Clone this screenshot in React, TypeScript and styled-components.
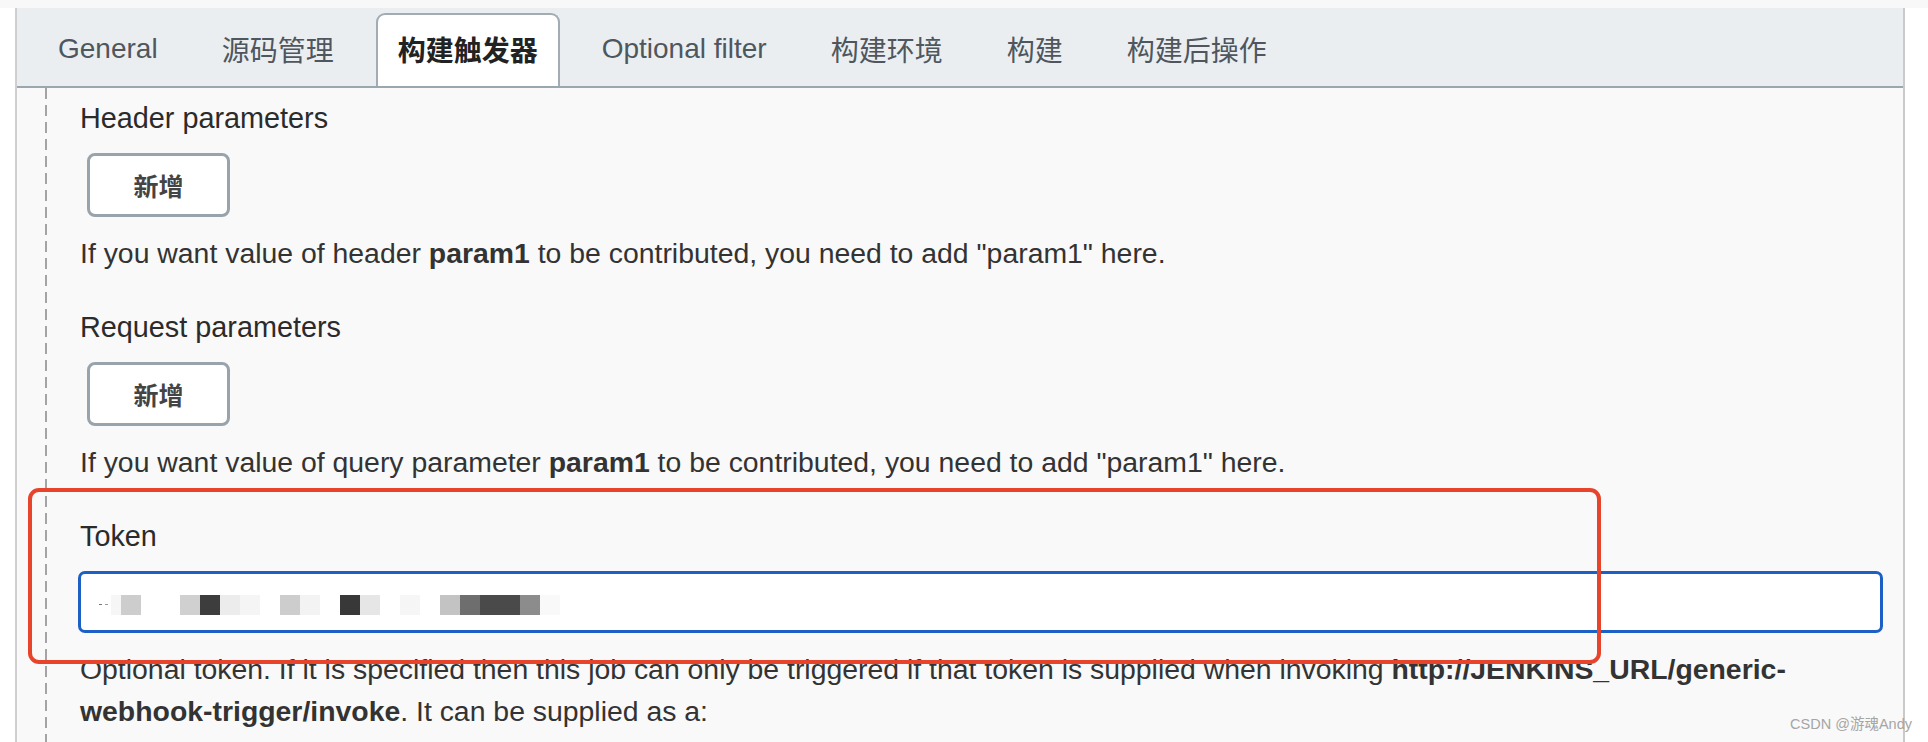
import React from "react";
import styled, { createGlobalStyle } from "styled-components";

const Global = createGlobalStyle`
  html, body { margin: 0; padding: 0; height: 100%; background: #ffffff; }
  body { font-family: "Liberation Sans", Arial, "Noto Sans CJK SC", sans-serif; color: #333; }
  #root { min-height: 100%; }
`;

const Page = styled.div`
  min-height: 742px;
  display: flex;
  flex-direction: column;
  position: relative;
  overflow: hidden;
`;

const TopStrip = styled.div`
  height: 8px;
  background: #f8f8f8;
  flex: none;
`;

const Panel = styled.div`
  margin-left: 15px;
  width: 1890px;
  box-sizing: border-box;
  border-left: 2px solid #cfcfcf;
  border-right: 2px solid #cacaca;
  background: #f9f9f9;
  flex: 1;
  display: flex;
  flex-direction: column;
`;

const TabBar = styled.div`
  height: 78px;
  border-bottom: 2px solid #9ba7af;
  background: #eaeef1;
  display: flex;
  align-items: flex-end;
  gap: 20px;
  padding-left: 19px;
`;

const Tab = styled.div<{ $active?: boolean }>`
  height: 73px;
  box-sizing: border-box;
  padding: 0 20px 4px;
  display: flex;
  align-items: center;
  border: 2px solid ${(p) => (p.$active ? "#a3acb3" : "transparent")};
  border-bottom: none;
  border-radius: 9px 9px 0 0;
  background: ${(p) => (p.$active ? "#ffffff" : "transparent")};
  font-size: 28px;
  font-weight: ${(p) => (p.$active ? 700 : 400)};
  color: ${(p) => (p.$active ? "#222" : "#4f565d")};
  white-space: nowrap;
`;

const Content = styled.div`
  flex: 1;
  display: flex;
  padding: 0 20px 0 28px;
`;

const Section = styled.div`
  flex: 1;
  padding: 10px 0 0 35px;
  background: repeating-linear-gradient(to bottom, #a4a4a4 0 11px, transparent 11px 17px) left top / 2px 100% no-repeat;
  display: flex;
  flex-direction: column;
  gap: 33px;
`;

const Field = styled.div`
  position: relative;
  display: flex;
  flex-direction: column;
  gap: 15px;
`;

const Label = styled.div`
  font-size: 28.8px;
  line-height: 40px;
  color: #2b2b2b;
`;

const AddButton = styled.button`
  margin-left: 7px;
  width: 143px;
  height: 64px;
  box-sizing: border-box;
  border: 3px solid #99a3ab;
  border-radius: 8px;
  background: #fff;
  font-family: "Noto Sans CJK SC", sans-serif;
  font-size: 25px;
  font-weight: 700;
  color: #444;
  padding: 0;
`;

const Desc = styled.div`
  font-size: 28.4px;
  line-height: 42px;
  color: #333;
  b { font-weight: 700; }
`;

const TokenBox = styled.div`
  height: 62px;
  box-sizing: border-box;
  margin-left: -2px;
  border: 3px solid #1c5fc5;
  border-radius: 7px;
  background: #fff;
  display: flex;
  align-items: center;
  padding-top: 6px;
`;

const Highlight = styled.div`
  position: absolute;
  left: -52px;
  top: -28px;
  width: 1573px;
  height: 176px;
  box-sizing: border-box;
  border: 4px solid #e8432b;
  border-radius: 11px;
  pointer-events: none;
`;

const Watermark = styled.div`
  position: absolute;
  right: 16px;
  bottom: 9px;
  font-size: 14.5px;
  color: #a5a5a5;
  font-family: "Liberation Sans", "Noto Sans CJK SC", sans-serif;
`;

const blocks: [number, string][] = [
  [40, "#cdcdcd"],
  [99, "#d0d0d0"],
  [119, "#3d3d3d"],
  [139, "#ececec"],
  [159, "#f5f5f5"],
  [199, "#cdcdcd"],
  [219, "#f3f3f3"],
  [259, "#383838"],
  [279, "#e6e6e6"],
  [319, "#f6f6f6"],
  [359, "#c3c3c3"],
  [379, "#6e6e6e"],
  [399, "#4a4a4a"],
  [419, "#4a4a4a"],
  [439, "#8c8c8c"],
];

const Mosaic = () => (
  <svg width="480" height="20" viewBox="0 0 480 20">
    <rect x="18" y="9" width="3" height="1" fill="#777" />
    <rect x="24" y="9" width="3" height="1" fill="#999" />
    <rect x="30" y="0" width="10" height="20" fill="#f6f6f6" />
    {blocks.map(([x, c]) => (
      <rect key={x} x={x} y="0" width="20" height="20" fill={c} />
    ))}
    <rect x="459" y="-6" width="20" height="26" fill="#f9f9f9" />
  </svg>
);

const tabs = ["General", "源码管理", "构建触发器", "Optional filter", "构建环境", "构建", "构建后操作"];

export default function App() {
  return (
    <Page>
      <Global />
      <TopStrip />
      <Panel>
        <TabBar>
          {tabs.map((t) => (
            <Tab key={t} $active={t === "构建触发器"}>
              {t}
            </Tab>
          ))}
        </TabBar>
        <Content>
          <Section>
            <Field>
              <Label>Header parameters</Label>
              <div>
                <AddButton>新增</AddButton>
              </div>
              <Desc>
                If you want value of header <b>param1</b> to be contributed, you need to add "param1" here.
              </Desc>
            </Field>
            <Field>
              <Label>Request parameters</Label>
              <div>
                <AddButton>新增</AddButton>
              </div>
              <Desc>
                If you want value of query parameter <b>param1</b> to be contributed, you need to add "param1" here.
              </Desc>
            </Field>
            <Field>
              <Highlight />
              <Label>Token</Label>
              <TokenBox>
                <Mosaic />
              </TokenBox>
              <Desc>
                Optional token. If it is specified then this job can only be triggered if that token is supplied when
                invoking <b>http://JENKINS_URL/generic-webhook-trigger/invoke</b>. It can be supplied as a:
              </Desc>
            </Field>
          </Section>
        </Content>
      </Panel>
      <Watermark>CSDN @游魂Andy</Watermark>
    </Page>
  );
}
